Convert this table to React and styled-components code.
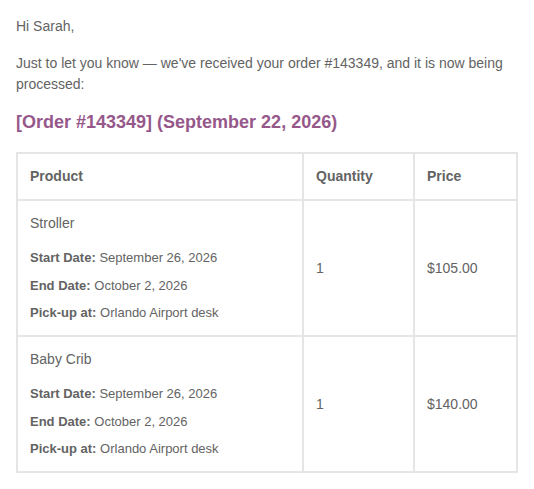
import React from "react";
import styled, { createGlobalStyle } from "styled-components";

const items = [
    { name: "Stroller", qty: 1, price: "$105.00" },
    { name: "Baby Crib", qty: 1, price: "$140.00" },
];

const meta = [
    ["Start Date:", "September 26, 2026"],
    ["End Date:", "October 2, 2026"],
    ["Pick-up at:", "Orlando Airport desk"],
];

const App = () => {
    return (
        <Wrapper>
            <GlobalStyle />
            <Text>Hi Sarah,</Text>
            <Text>
                Just to let you know — we've received your order #143349, and it is now being processed:
            </Text>
            <Heading>[Order #143349] (September 22, 2026)</Heading>
            <Table cellSpacing="0" cellPadding="0">
                <thead>
                    <tr>
                        <Th $w="286px">Product</Th>
                        <Th $w="111px">Quantity</Th>
                        <Th>Price</Th>
                    </tr>
                </thead>
                <tbody>
                    {items.map((item) => (
                        <tr key={item.name}>
                            <Td $product>
                                {item.name}
                                <MetaList>
                                    {meta.map(([label, value]) => (
                                        <li key={label}>
                                            <strong>{label}</strong> {value}
                                        </li>
                                    ))}
                                </MetaList>
                            </Td>
                            <Td>{item.qty}</Td>
                            <Td>{item.price}</Td>
                        </tr>
                    ))}
                </tbody>
            </Table>
        </Wrapper>
    );
};

const GlobalStyle = createGlobalStyle`
    body {
        margin: 0;
        background: #fff;
        font-family: "Liberation Sans", Arial, sans-serif;
        color: #636363;
    }
`;

const Wrapper = styled.div`
    padding: 16px;
    font-size: 14px;
    line-height: 21px;
`;

const Text = styled.p`
    margin: 0 0 16px;
`;

const Heading = styled.h2`
    margin: 0 0 18px;
    font-size: 18px;
    line-height: 23.4px;
    font-weight: bold;
    color: #96588a;
`;

const Table = styled.table`
    width: 100%;
    border: 1px solid #e5e5e5;
    border-collapse: separate;
    color: #636363;
    font-size: 14px;
`;

const Th = styled.th`
    box-sizing: border-box;
    width: ${(p) => p.$w || "auto"};
    border: 1px solid #e5e5e5;
    padding: 12px;
    text-align: left;
    font-weight: bold;
    line-height: 21px;
`;

const Td = styled.td`
    border: 1px solid #e5e5e5;
    padding: 12px 12px ${(p) => (p.$product ? "11px" : "12px")};
    text-align: left;
    vertical-align: middle;
    line-height: 21px;
`;

const MetaList = styled.ul`
    list-style: none;
    margin: 13px 0 0;
    padding: 0;
    font-size: 13px;

    & li {
        line-height: 22px;
    }
    & li + li {
        margin-top: 5.5px;
    }
`;

export default App;
